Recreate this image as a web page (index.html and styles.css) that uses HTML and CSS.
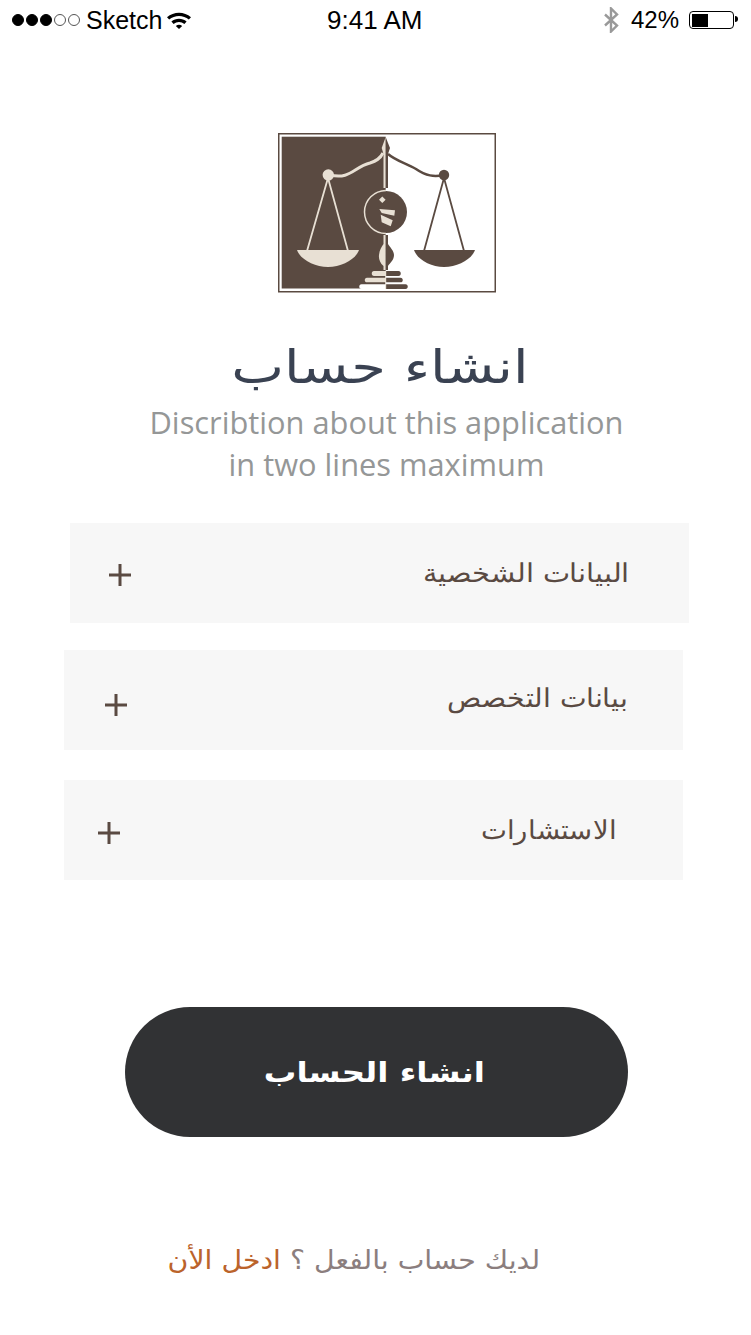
FILE: index.html
```html
<!DOCTYPE html>
<html lang="ar">
<head>
  <meta charset="UTF-8">
  <meta name="viewport" content="width=device-width, initial-scale=1.0">
  <title>انشاء حساب</title>
  <link rel="stylesheet" href="styles.css">
</head>
<body>
  <div class="status-bar">
    <div class="status-left">
      <span class="signal">
        <i class="dot"></i><i class="dot"></i><i class="dot"></i><i class="dot empty"></i><i class="dot empty"></i>
      </span>
      <span class="carrier">Sketch</span>
      <svg class="wifi" width="24" height="18" viewBox="0 0 24 18">
        <path d="M0 6.2C6.6 .2 17.4 .2 24 6.2L21.8 8.6C16.4 3.8 7.6 3.8 2.2 8.6Z" fill="#000"/>
        <path d="M4.4 10.6C8.8 6.8 15.2 6.8 19.6 10.6L17.4 13C14.2 10.3 9.8 10.3 6.6 13Z" fill="#000"/>
        <path d="M8.8 15C10.8 13.4 13.2 13.4 15.2 15L12 18Z" fill="#000"/>
      </svg>
    </div>
    <div class="status-time">9:41 AM</div>
    <div class="status-right">
      <svg class="bluetooth" width="16" height="26" viewBox="0 0 16 26">
        <path d="M2 7.5L14 18.5L8 24.5V1.5L14 7.5L2 18.5" fill="none" stroke="#999" stroke-width="2.4"/>
      </svg>
      <span class="battery-text">42%</span>
      <span class="battery"><span class="battery-level"></span></span>
    </div>
  </div>

  <div class="logo-wrap">
    <svg class="logo" width="218" height="160" viewBox="0 0 218 160">
      <rect x=".75" y=".75" width="216.5" height="158" fill="#fff" stroke="#5a4a41" stroke-width="1.5"/>
      <rect x="3.7" y="3.7" width="104" height="151.8" fill="#5a4a41"/>

      <!-- base -->
      <path d="M96 138H108V143H96C93 143 93 138 96 138ZM89 144.7H108V149.3H89C86 149.3 86 144.7 89 144.7Z" fill="#e8e0d4"/>
      <path d="M83.5 151.3H108V156H83.5C80.5 156 80.5 151.3 83.5 151.3Z" fill="#fff"/>
      <path d="M108 138H120.5C123.5 138 123.5 143 120.5 143H108ZM108 144.7H122.5C125.5 144.7 125.5 149.3 122.5 149.3H108ZM108 151.3H127.5C130.5 151.3 130.5 156 127.5 156H108Z" fill="#5a4a41"/>

      <!-- pillar -->
      <path d="M107.7 4L105.5 10L103.7 15L105.5 21V55H107.7Z" fill="#e8e0d4"/>
      <path d="M107.7 4L110 10L112 15L110 21V55H107.7Z" fill="#5a4a41"/>
      <path d="M105.5 102H107.7V137H105.5V133C102 130 100.5 126 101 122C101.5 117 103.5 114 105.5 111Z" fill="#e8e0d4"/>
      <path d="M107.7 102H110V111C112 114 116 118 116 122C116 127 112 130 110 133V137H107.7Z" fill="#5a4a41"/>

      <!-- beam -->
      <path d="M52 42C72 47 76 34 92 30C98 28 102 26 105 20" fill="none" stroke="#e8e0d4" stroke-width="3"/>
      <path d="M110 21C118 28 128 30 138 36C148 43 156 44 166 42" fill="none" stroke="#5a4a41" stroke-width="2.5"/>
      <circle cx="50.3" cy="42" r="5.7" fill="#e8e0d4"/>
      <circle cx="166" cy="42" r="5.2" fill="#5a4a41"/>

      <!-- left pan -->
      <path d="M50 45L29 118M50 45L70 118" fill="none" stroke="#e8e0d4" stroke-width="1.8"/>
      <path d="M19 117H81C78 126 64 134 50 134C36 134 22 126 19 117Z" fill="#e8e0d4"/>

      <!-- right pan -->
      <path d="M166 45L146 118M166 45L186 118" fill="none" stroke="#5a4a41" stroke-width="1.8"/>
      <path d="M136 117H197C194 126 180 134 166 134C152 134 139 126 136 117Z" fill="#5a4a41"/>

      <!-- medallion -->
      <circle cx="108" cy="79" r="21" fill="#5a4a41"/>
      <path d="M108 57.5A21.5 21.5 0 0 0 108 100.5" fill="none" stroke="#e8e0d4" stroke-width="1.5"/>
      <path d="M104.3 63.4L107.6 66.7L104.3 70L101 66.7ZM101.3 76L117 77.3L116.3 82.7L103.7 80ZM102.7 81.7L114.7 87.3L112.7 93.3L103.7 89.3Z" fill="#e8e0d4"/>
      <path d="M107.7 138V156" fill="none" stroke="#e8e0d4" stroke-width="1"/>
    </svg>
  </div>

  <h1 class="title"><span class="wide">انشاء حساب</span></h1>
  <p class="description">Discribtion about this application<br>in two lines maximum</p>

  <div class="section section-first">
    <svg class="plus" width="22" height="22" viewBox="0 0 22 22"><path d="M0 11H22M11 0V22"/></svg>
    <span class="section-label">البيانات الشخصية</span>
  </div>
  <div class="section section-second">
    <svg class="plus" width="22" height="22" viewBox="0 0 22 22"><path d="M0 11H22M11 0V22"/></svg>
    <span class="section-label">بيانات التخصص</span>
  </div>
  <div class="section section-third">
    <svg class="plus" width="22" height="22" viewBox="0 0 22 22"><path d="M0 11H22M11 0V22"/></svg>
    <span class="section-label">الاستشارات</span>
  </div>

  <button type="button" class="submit"><span class="wide">انشاء الحساب</span></button>

  <p class="login-line"><span class="wide">لديك حساب بالفعل ؟ <a class="login-link" href="#">ادخل الأن</a></span></p>
</body>
</html>
```

FILE: styles.css
```css
html, body { margin: 0; padding: 0; background: #fff; }
body { width: 751px; height: 1335px; overflow: hidden; font-family: "DejaVu Sans", sans-serif; }

.status-bar { display: flex; justify-content: space-between; align-items: center; height: 40px; padding: 0 17px 0 12px; font-family: "Liberation Sans", sans-serif; font-size: 25px; color: #000; position: relative; }
.status-left, .status-right { display: flex; align-items: center; }
.status-time { position: absolute; left: 327px; top: 5px; font-size: 26px; }
.signal { display: flex; gap: 2px; margin-right: 6px; }
.dot { display: block; width: 12px; height: 12px; border-radius: 50%; background: #000; border: 1px solid #000; box-sizing: border-box; }
.dot.empty { background: #fff; border-color: #555; }
.wifi { margin-left: 5px; }
.bluetooth { margin-right: 12px; }
.battery-text { margin-right: 10px; font-size: 24px; }
.battery { position: relative; display: block; width: 45px; height: 18px; border: 1.5px solid #000; border-radius: 4px; box-sizing: border-box; padding: 1.5px; }
.battery::after { content: ""; position: absolute; right: -5px; top: 4px; width: 3px; height: 6px; background: #000; border-radius: 0 3px 3px 0; }
.battery-level { display: block; width: 16px; height: 100%; background: #000; }

.logo-wrap { display: flex; justify-content: center; padding: 93px 0 0 22px; box-sizing: border-box; }
.logo { display: block; }

/* the arabic face here is narrower than the design one */
.wide { display: inline-block; transform: scaleX(1.22); }

.title { margin: 44px 0 0; padding-left: 8px; text-align: center; font-size: 46px; line-height: 60px; font-weight: 400; color: #3a4252; }
.description { margin: 4px 0 0; padding-left: 22px; text-align: center; font-family: "Open Sans", sans-serif; font-size: 30.8px; line-height: 42px; color: #959797; }

.section { display: flex; justify-content: space-between; align-items: center; width: 619px; height: 100px; box-sizing: border-box; background: #f7f7f7; color: #5a4a42; }
.section-first { margin: 38px 0 0 70px; padding: 4px 60px 0 39px; }
.section-second { margin: 27px 0 0 64px; padding: 10px 56px 0 41px; }
.section-third { margin: 30px 0 0 64px; padding: 6px 67px 0 34px; }
.section-label { font-size: 26px; font-weight: 200; line-height: 30px; transform-origin: right center; }
.section-first .section-label { margin-top: -4px; transform: scaleX(1.11); }
.section-second .section-label { margin-top: -14px; transform: scaleX(1.09); }
.section-third .section-label { margin-top: -6px; transform: scaleX(1.06); }
.plus { display: block; }
.plus path { fill: none; stroke: #5a4a42; stroke-width: 3; }

.submit { display: block; width: 503px; height: 130px; margin: 127px 0 0 125px; padding: 0 4px 0 0; border: none; border-radius: 65px; background: #313234; color: #fff; font-family: inherit; font-size: 28px; font-weight: 700; cursor: pointer; }
.submit .wide { transform: scaleX(1.16); }

.login-line { margin: 107px 0 0; padding-right: 43px; text-align: center; font-size: 26px; line-height: 32px; color: #8b7e7e; }
.login-line .wide { transform: scaleX(1.09); }
.login-link { color: #bb632b; text-decoration: none; }
```
